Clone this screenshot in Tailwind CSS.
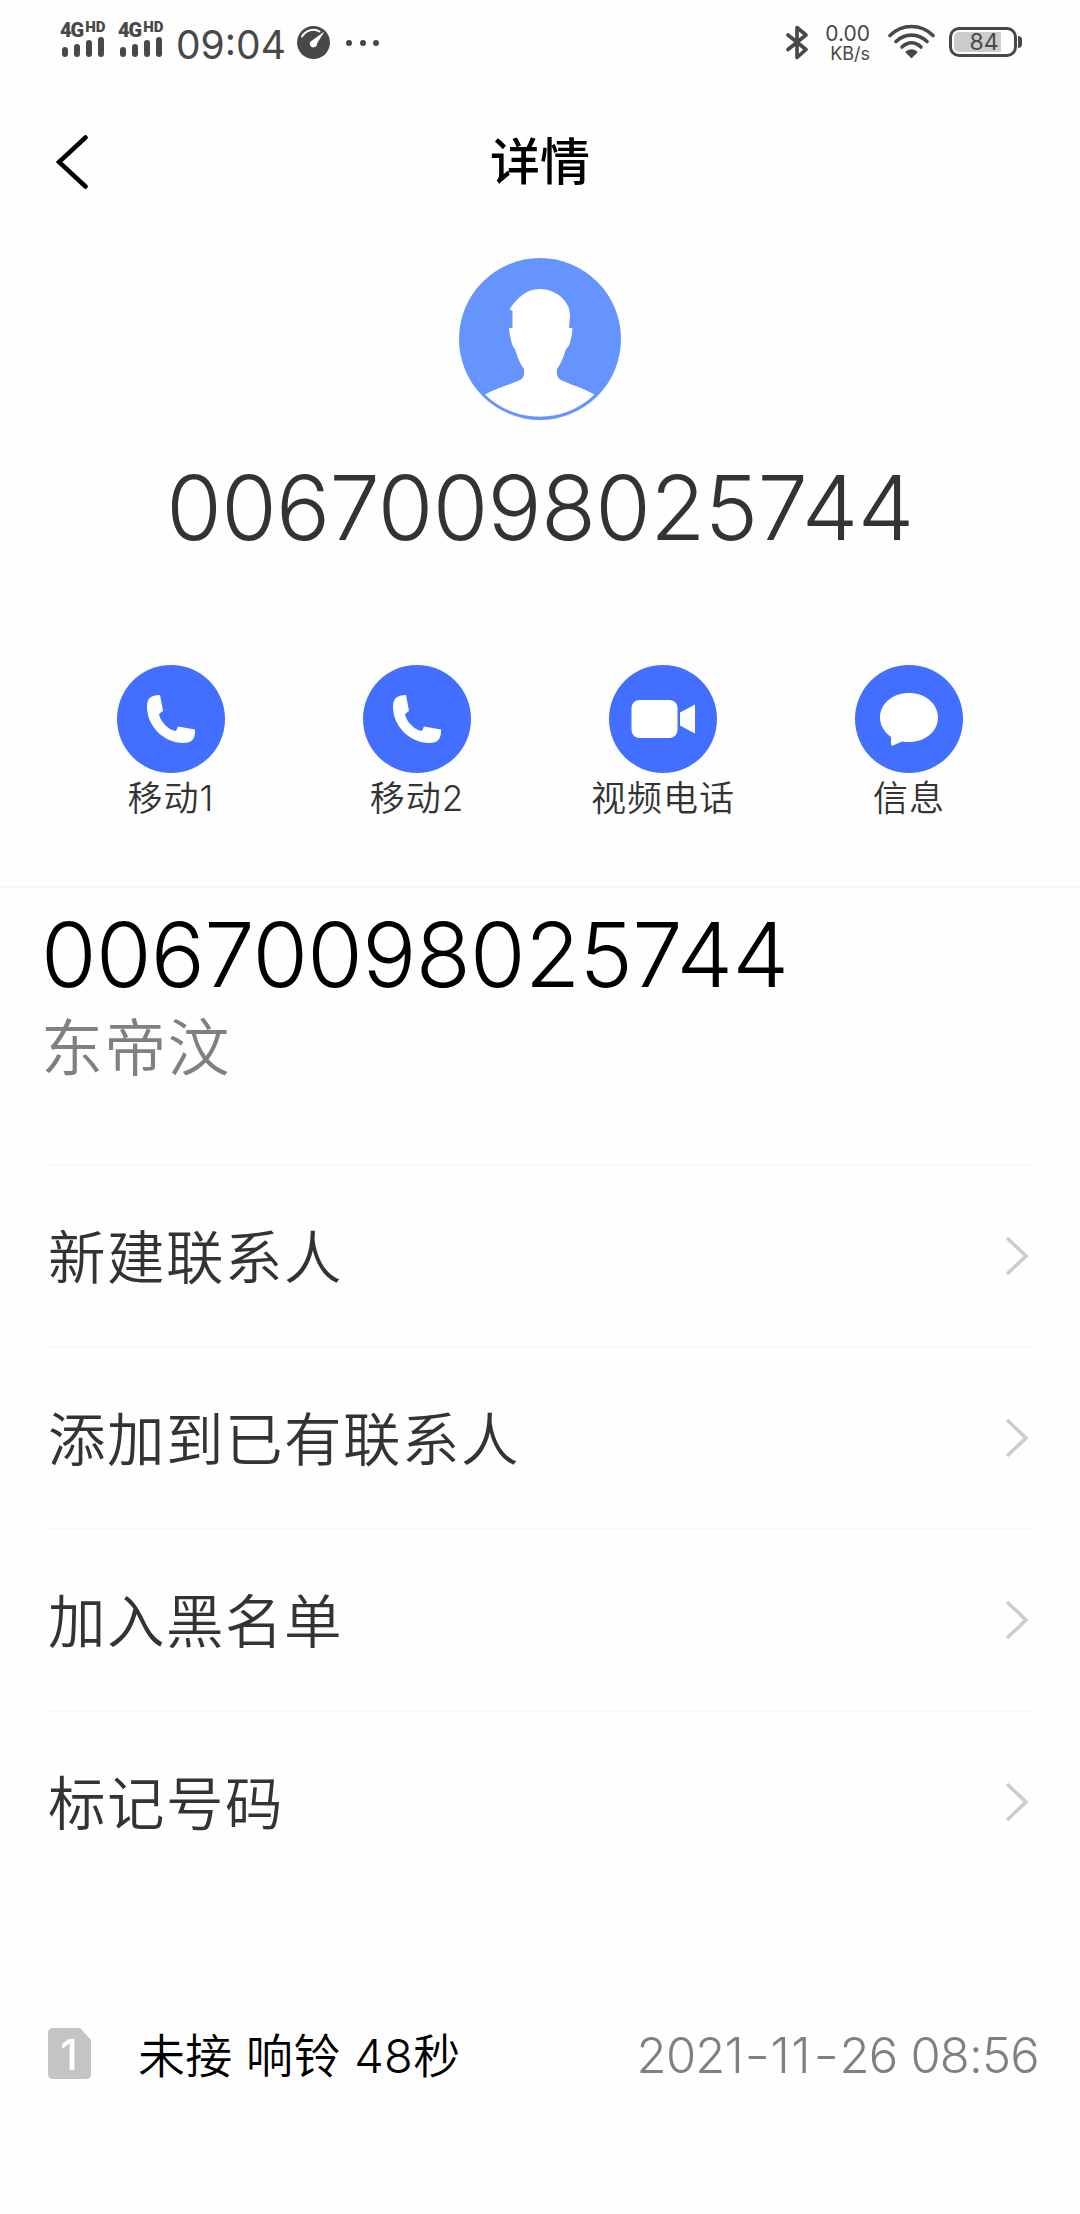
<!DOCTYPE html>
<html lang="zh-CN">
  <head>
    <meta charset="UTF-8" />
    <meta name="viewport" content="width=device-width, initial-scale=1.0" />
    <title>详情</title>
    <script src="https://cdn.jsdelivr.net/npm/@tailwindcss/browser@4"></script>
  </head>
  <body class="w-[1080px] h-[2214px] overflow-hidden bg-[#fefefe] text-[#333] flex flex-col font-['Inter','Noto_Sans_CJK_SC',sans-serif] font-light whitespace-nowrap">
    <!-- Status bar -->
    <div class="h-[84px] pl-[60px] pr-[58px] flex justify-between text-[#484848]">
      <div class="flex items-start">
        <div class="w-[58px] pt-5">
          <div class="flex items-start h-[17px] leading-none font-black">
            <span class="text-[20px] leading-[20px] tracking-[-1px] font-['Roboto']">4G</span>
            <span class="text-[15px] leading-[14px] ml-[2px] font-['Roboto']">HD</span>
          </div>
          <div class="flex items-end gap-[6px] h-5 pl-[2px]">
            <i class="w-[6px] h-[10px] rounded-[3px] bg-[#484848]"></i>
            <i class="w-[6px] h-[13px] rounded-[3px] bg-[#484848]"></i>
            <i class="w-[6px] h-[17px] rounded-[3px] bg-[#484848]"></i>
            <i class="w-[6px] h-[20px] rounded-[3px] bg-[#484848]"></i>
          </div>
        </div>
        <div class="w-[58px] pt-5">
          <div class="flex items-start h-[17px] leading-none font-black">
            <span class="text-[20px] leading-[20px] tracking-[-1px] font-['Roboto']">4G</span>
            <span class="text-[15px] leading-[14px] ml-[2px] font-['Roboto']">HD</span>
          </div>
          <div class="flex items-end gap-[6px] h-5 pl-[2px]">
            <i class="w-[6px] h-[10px] rounded-[3px] bg-[#484848]"></i>
            <i class="w-[6px] h-[13px] rounded-[3px] bg-[#484848]"></i>
            <i class="w-[6px] h-[17px] rounded-[3px] bg-[#484848]"></i>
            <i class="w-[6px] h-[20px] rounded-[3px] bg-[#484848]"></i>
          </div>
        </div>
        <span class="w-[121px] pt-[25px] text-[39px] leading-10 font-normal">09:04</span>
        <svg class="mt-[26px]" width="33" height="33" viewBox="0 0 33 33">
          <circle cx="16.5" cy="16.5" r="16.5" fill="#484848" />
          <path d="M5 10.500C9 4 17 2 22.500 5.500" fill="none" stroke="#fefefe" stroke-width="2" stroke-linecap="round" />
          <path d="M27.500 5.500L20 17.500A3.600 3.600 0 1 1 15 14.500Z" fill="#fefefe" />
        </svg>
        <div class="flex gap-[7.500px] mt-10 ml-4">
          <i class="size-[6px] rounded-full bg-[#484848]"></i>
          <i class="size-[6px] rounded-full bg-[#484848]"></i>
          <i class="size-[6px] rounded-full bg-[#484848]"></i>
        </div>
      </div>
      <div class="flex items-start">
        <svg class="mt-[25px]" width="22" height="35" viewBox="0 0 22 35" fill="none" stroke="#484848" stroke-width="3.600" stroke-linejoin="round" stroke-linecap="round">
          <path d="M2 10L20 24.500L11 32.500V2.500L20 10L2 24.500" />
        </svg>
        <div class="ml-[16px] w-[46px] pt-[23px] text-right font-normal">
          <div class="text-[21px] leading-[21px]">0.00</div>
          <div class="text-[18px] leading-[19px]">KB/s</div>
        </div>
        <svg class="ml-[18px] mt-[24px]" width="47" height="35" viewBox="0 0 47 35" fill="none" stroke="#484848" stroke-width="3.600" stroke-linecap="round">
          <path d="M2 11.500C14 -.5 33 -.5 45 11.500" />
          <path d="M8 17.500C17 9 30 9 39 17.500" />
          <path d="M14 23C20 17.500 27 17.500 33 23" />
          <path d="M18.500 28Q23.500 24.500 28.500 28L23.500 33Z" fill="#484848" stroke-width="2" stroke-linejoin="round" />
        </svg>
        <div class="flex items-center ml-[14px] mt-[27px]">
          <div class="relative w-[68px] h-[30px] border-3 border-[#484848] rounded-[10px] p-[2px]">
            <div class="w-[47px] h-full bg-[#ccc] rounded-l-[5px]"></div>
            <span class="absolute inset-0 pl-[2px] text-center text-[23px] leading-[25px] font-normal">84</span>
          </div>
          <i class="w-[4px] h-[12px] ml-px bg-[#484848] rounded-r-[4px]"></i>
        </div>
      </div>
    </div>

    <!-- Title bar -->
    <header class="h-[156px] px-[56px] grid grid-cols-[1fr_auto_1fr] items-start text-black">
      <svg class="mt-[50px]" width="34" height="56" viewBox="0 0 34 56" fill="none" stroke="currentColor" stroke-width="4.500" stroke-linecap="round">
        <path d="M29.500 3.500L3 28L29.500 52.500" />
      </svg>
      <h1 class="mt-[43px] text-[50px] leading-[70px] font-medium">详情</h1>
    </header>

    <!-- Caller -->
    <section class="h-[425px] flex flex-col items-center">
      <svg class="mt-[18px]" width="162" height="162" viewBox="0 0 162 162">
        <circle cx="81" cy="81" r="81" fill="#6694ff" />
        <path d="M26 136.500C37 130 53 126 61 122Q66 120 65 111Q60 105 56 91Q52 88 50 70H53.500V53L50.500 51.500C58 40 67 31 81 31C98 31 112 45 111 58L110 70H113.500Q112 88 107 91Q103 104 98 111Q97 120 102 122C110 126 124 130 135.500 136.500A78.500 78.500 0 0 1 26 136.500Z" fill="#fff" />
      </svg>
      <div class="mt-[38px] text-[90px] leading-[100px] tracking-[-0.700px]">00670098025744</div>
    </section>

    <!-- Actions -->
    <nav class="h-[223px] px-12 flex border-b-2 border-[#f7f7f7]">
      <a class="w-[246px] flex flex-col items-center">
        <svg width="108" height="108" viewBox="0 0 108 108">
          <circle cx="54" cy="54" r="54" fill="#426fff" />
          <path id="handset" d="M30 42C30 34 33 30 43 30L46 46L42 49C43 56 51 65 59 66L61 61.500L78 64.500C78.500 74 75 78 66 78C47 78 30 61 30 42Z" fill="#fff" />
        </svg>
        <span class="text-[35px] leading-[50px] tracking-[1px] font-[350]">移动1</span>
      </a>
      <a class="w-[246px] flex flex-col items-center">
        <svg width="108" height="108" viewBox="0 0 108 108">
          <circle cx="54" cy="54" r="54" fill="#426fff" />
          <use href="#handset" />
        </svg>
        <span class="text-[35px] leading-[50px] tracking-[1px] font-[350]">移动2</span>
      </a>
      <a class="w-[246px] flex flex-col items-center">
        <svg width="108" height="108" viewBox="0 0 108 108" fill="#fff">
          <circle cx="54" cy="54" r="54" fill="#426fff" />
          <rect x="22.500" y="35" width="46" height="38" rx="8" />
          <path d="M71 47.500L86 39.500V68.500L71 60.500Z" />
        </svg>
        <span class="text-[35px] leading-[50px] tracking-[1px] font-[350]">视频电话</span>
      </a>
      <a class="w-[246px] flex flex-col items-center">
        <svg width="108" height="108" viewBox="0 0 108 108" fill="#fff">
          <circle cx="54" cy="54" r="54" fill="#426fff" />
          <path d="M54 28C70 28 83 38.500 83 52.500S70 77 54 77Q50 77 47 76.500L38 80.500Q36 81 36 79V72C29 67 25 60 25 52.500C25 38.500 38 28 54 28Z" />
        </svg>
        <span class="text-[35px] leading-[50px] tracking-[1px] font-[350]">信息</span>
      </a>
    </nav>

    <!-- Number and region -->
    <section class="h-[276px] pl-[41px]">
      <div class="pt-[17px] text-[90px] leading-[100px] tracking-[-0.700px] text-black">00670098025744</div>
      <div class="pt-px text-[62px] leading-[86px] tracking-[1.200px] text-[#808080] font-[350]">东帝汶</div>
    </section>

    <ul class="px-12">
      <li class="h-[182px] flex items-center justify-between border-t-2 border-[#f8f8f8]">
        <span class="pt-[5px] text-[57.5px] tracking-[1.500px] font-[350]">新建联系人</span>
        <svg class="mr-[3px]" width="24" height="40" viewBox="0 0 24 40" fill="none" stroke="#ccc" stroke-width="3.500"><path d="M2 2L21 20L2 38" /></svg>
      </li>
      <li class="h-[182px] flex items-center justify-between border-t-2 border-[#f8f8f8]">
        <span class="pt-[5px] text-[57.5px] tracking-[1.500px] font-[350]">添加到已有联系人</span>
        <svg class="mr-[3px]" width="24" height="40" viewBox="0 0 24 40" fill="none" stroke="#ccc" stroke-width="3.500"><path d="M2 2L21 20L2 38" /></svg>
      </li>
      <li class="h-[182px] flex items-center justify-between border-t-2 border-[#f8f8f8]">
        <span class="pt-[5px] text-[57.5px] tracking-[1.500px] font-[350]">加入黑名单</span>
        <svg class="mr-[3px]" width="24" height="40" viewBox="0 0 24 40" fill="none" stroke="#ccc" stroke-width="3.500"><path d="M2 2L21 20L2 38" /></svg>
      </li>
      <li class="h-[182px] flex items-center justify-between border-t-2 border-[#f8f8f8]">
        <span class="pt-[5px] text-[57.5px] tracking-[1.500px] font-[350]">标记号码</span>
        <svg class="mr-[3px]" width="24" height="40" viewBox="0 0 24 40" fill="none" stroke="#ccc" stroke-width="3.500"><path d="M2 2L21 20L2 38" /></svg>
      </li>
    </ul>

    <!-- Call log -->
    <div class="mt-[122px] h-[82px] pl-12 pr-[41px] flex items-center text-[47px]">
      <svg class="-mt-[3px]" width="43" height="51" viewBox="0 0 43 51">
        <path d="M5 0H32L43 12V46Q43 51 38 51H5Q0 51 0 46V5Q0 0 5 0Z" fill="#c4c4c4" />
        <text x="21" y="42" text-anchor="middle" font-size="42" font-weight="500" fill="#fff">1</text>
      </svg>
      <span class="ml-[47px] pt-[2px] text-black font-[350] tracking-[0.300px]">未接 响铃 48秒</span>
      <span class="ml-auto pt-[2px] text-[49px] tracking-[-0.800px] text-[#808080]">2021<span class="inline-block px-[3px] scale-x-115">-</span><span class="tracking-[1.500px]">11</span><span class="inline-block px-[3px] scale-x-115">-</span>26 08:56</span>
    </div>
  </body>
</html>
